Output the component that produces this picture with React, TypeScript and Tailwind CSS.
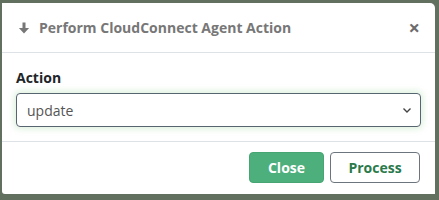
export default function App() {
  return (
    <div
      className="h-[200px] w-[439px] overflow-hidden bg-[#62705f] pl-[2px] pt-[3px]"
      style={{ fontFamily: '"Open Sans", "Liberation Sans", sans-serif' }}
    >
      <div className="w-[433px] h-[191px] bg-white rounded-tr-[5px] rounded-bl-[3px] flex flex-col">
        <div className="h-[50px] shrink-0 flex items-center justify-between pl-[16px] pr-[15px] border-b border-[#dee2e6]">
          <div className="flex items-center gap-[9px] text-[#777777] font-bold text-[14px]">
            <svg width="12" height="12" viewBox="0 0 12 12" className="mt-[1px]">
              <path d="M4.5 0.5h3v5.5h3.6L6 11.5 0.9 6H4.5z" fill="#777777" />
            </svg>
            <span>Perform CloudConnect Agent Action</span>
          </div>
          <span className="text-[#6c6c6c] text-[20px] font-bold leading-none mt-[1px]">×</span>
        </div>
        <div className="px-[14px] pt-[15px] pb-[14px] border-b border-[#dee2e6]">
          <div className="text-[14px] font-bold text-[#212529] leading-[20px] mb-[5px]">Action</div>
          <div className="h-[34px] w-[405px] border border-[#56656f] rounded-[4px] flex items-center justify-between pl-[10px] pr-[8px] shadow-[0_0_6px_2px_rgba(120,200,120,0.25)]">
            <span className="text-[14px] text-[#555555]">update</span>
            <svg width="10" height="7" viewBox="0 0 10 7">
              <path d="M1.5 1.5l3.5 3.5 3.5-3.5" stroke="#444" strokeWidth="1.4" fill="none" />
            </svg>
          </div>
        </div>
        <div className="flex-1 flex items-start justify-end gap-[6px] pt-[10px] pr-[15px]">
          <button className="h-[31px] w-[75px] rounded-[4px] bg-[#4caf7c] border border-[#46a573] text-white font-bold text-[14px]">
            Close
          </button>
          <button className="h-[31px] w-[90px] rounded-[4px] bg-white border border-[#6c757d] text-[#2a7a4b] font-bold text-[14px]">
            Process
          </button>
        </div>
      </div>
    </div>
  );
}
